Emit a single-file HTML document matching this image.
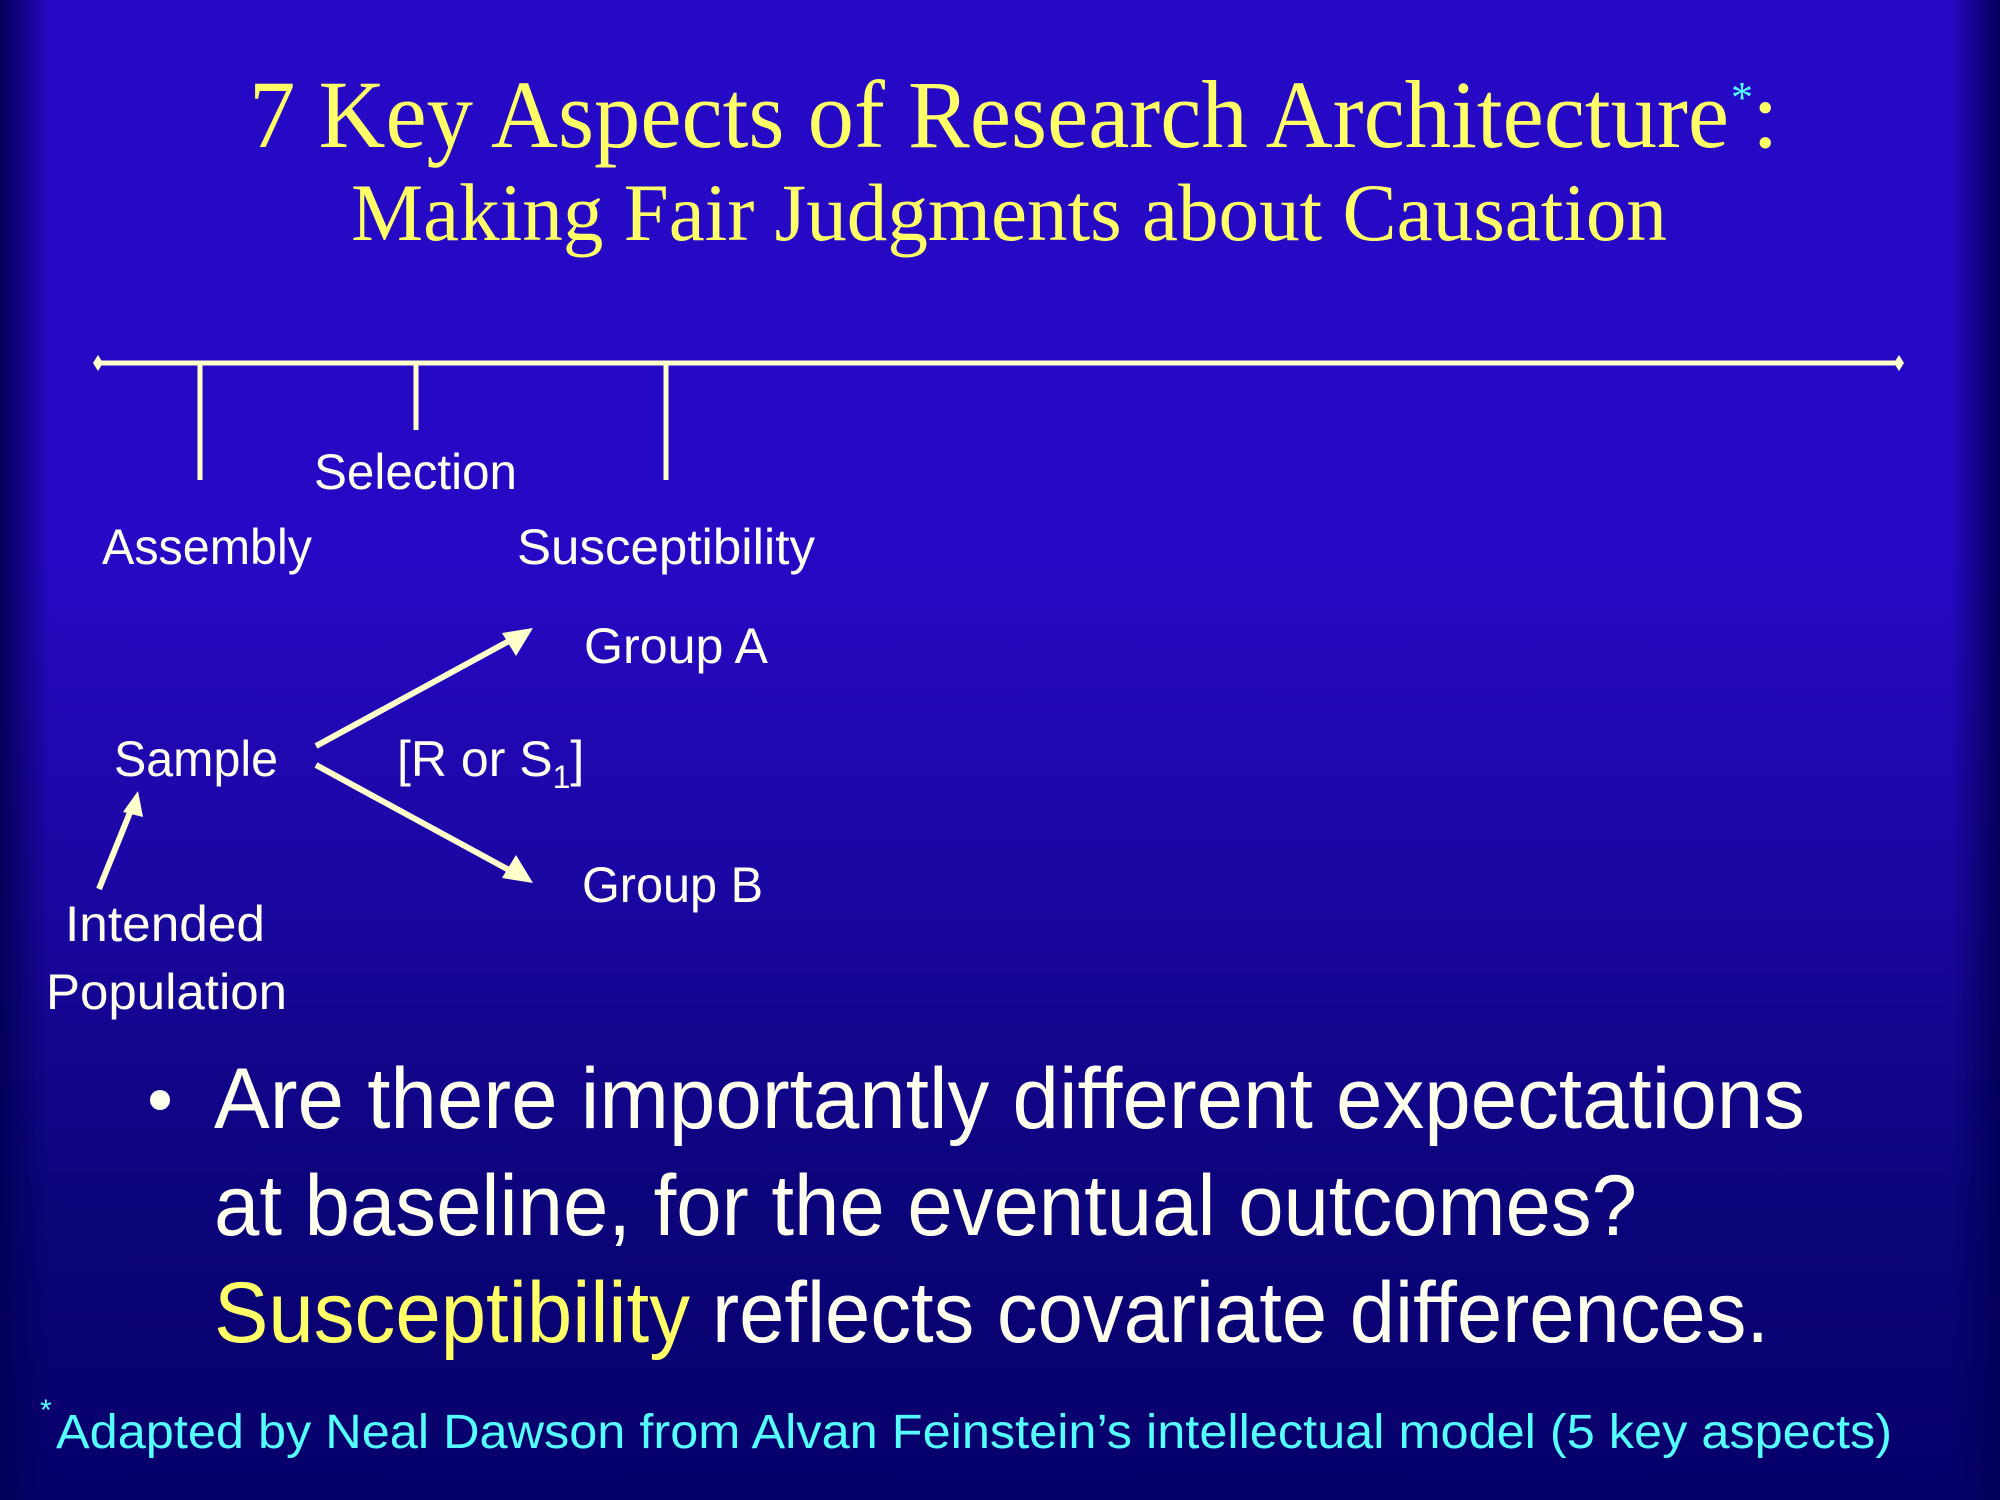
<!DOCTYPE html>
<html><head><meta charset="utf-8"><style>
html,body{margin:0;padding:0;}
body{width:2000px;height:1500px;overflow:hidden;position:relative;
background:linear-gradient(to bottom,#2609c4 0px,#2609c4 560px,#1a07a0 900px,#0c047a 1200px,#06006a 1500px);}
.v{position:absolute;top:0;bottom:0;width:50px;}
.l{left:0;background:linear-gradient(to right,rgba(4,0,90,1),rgba(4,0,90,0.5) 50%,rgba(4,0,90,0));}
.r{right:0;background:linear-gradient(to left,rgba(4,0,90,1),rgba(4,0,90,0.5) 50%,rgba(4,0,90,0));}
svg{position:absolute;left:0;top:0;}
</style></head><body>
<div class="v l"></div><div class="v r"></div>
<svg width="2000" height="1500" viewBox="0 0 2000 1500">
<g font-family="'Liberation Serif',serif" fill="#ffff66">
<text x="249" y="147" font-size="96" textLength="1480" lengthAdjust="spacingAndGlyphs">7 Key Aspects of Research Architecture</text>
<text x="1731" y="112" font-size="44" fill="#55ffff">*</text>
<text x="1752" y="147" font-size="96">:</text>
<text x="351" y="240" font-size="82" textLength="1316" lengthAdjust="spacingAndGlyphs">Making Fair Judgments about Causation</text>
</g>
<g stroke="#ffffcc" stroke-width="5" fill="none">
<line x1="98" y1="363" x2="1899" y2="363"/>
<line x1="200" y1="363" x2="200" y2="480"/>
<line x1="416" y1="363" x2="416" y2="430"/>
<line x1="666" y1="363" x2="666" y2="480"/>
<line x1="316" y1="746" x2="520" y2="635" stroke-width="6"/>
<line x1="316" y1="765" x2="520" y2="876" stroke-width="6"/>
<line x1="99" y1="889" x2="133" y2="805" stroke-width="6"/>
</g>
<g fill="#ffffcc">
<polygon points="98,355 103,363 98,371 93,363"/>
<polygon points="1899,355 1904,363 1899,371 1894,363"/>
<polygon points="533,628 502,633 516,656"/>
<polygon points="533,883 502,878 516,855"/>
<polygon points="138,791 123,812 143,817"/>
</g>
<g font-family="'Liberation Sans',sans-serif" fill="#ffffee" font-size="50">
<text x="314" y="489" textLength="203" lengthAdjust="spacingAndGlyphs">Selection</text>
<text x="102" y="564" textLength="210" lengthAdjust="spacingAndGlyphs">Assembly</text>
<text x="517" y="564" textLength="298" lengthAdjust="spacingAndGlyphs">Susceptibility</text>
<text x="584" y="663" textLength="184" lengthAdjust="spacingAndGlyphs">Group A</text>
<text x="114" y="776" textLength="164" lengthAdjust="spacingAndGlyphs">Sample</text>
<text x="397" y="776">[R or S<tspan font-size="32" dy="12">1</tspan><tspan dy="-12">]</tspan></text>
<text x="582" y="902" textLength="181" lengthAdjust="spacingAndGlyphs">Group B</text>
<text x="65" y="941" textLength="200" lengthAdjust="spacingAndGlyphs">Intended</text>
<text x="46" y="1009" textLength="241" lengthAdjust="spacingAndGlyphs">Population</text>
</g>
<g font-family="'Liberation Sans',sans-serif" font-size="86" fill="#ffffee">
<circle cx="160" cy="1100" r="10" fill="#ffffee"/>
<text x="214" y="1128" textLength="1591" lengthAdjust="spacingAndGlyphs">Are there importantly different expectations</text>
<text x="214" y="1235" textLength="1423" lengthAdjust="spacingAndGlyphs">at baseline, for the eventual outcomes?</text>
<text x="214" y="1342" fill="#ffff66" textLength="476" lengthAdjust="spacingAndGlyphs">Susceptibility</text>
<text x="712" y="1342" textLength="1057" lengthAdjust="spacingAndGlyphs">reflects covariate differences.</text>
</g>
<g font-family="'Liberation Sans',sans-serif" fill="#55ffff">
<text x="40" y="1420" font-size="30">*</text>
<text x="56" y="1448" font-size="48" textLength="1836" lengthAdjust="spacingAndGlyphs">Adapted by Neal Dawson from Alvan Feinstein’s intellectual model (5 key aspects)</text>
</g>
</svg>
</body></html>
